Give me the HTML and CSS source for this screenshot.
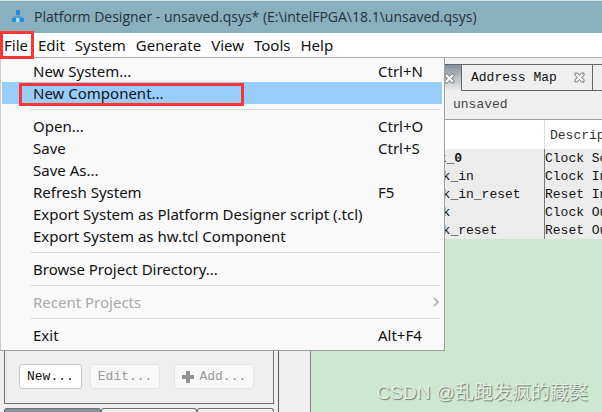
FILE: index.html
```html
<!DOCTYPE html>
<html lang="en">
<head>
<meta charset="utf-8">
<title>Platform Designer</title>
<link rel="stylesheet" href="styles.css">
</head>
<body>
<header class="titlebar">
  <svg class="logo" viewBox="0 0 14 14" aria-hidden="true">
    <path d="M7 5v3M3 10V8h8v2" fill="none" stroke="#3c8fd0"/>
    <rect x="5" y="1" width="4" height="5" fill="#1f8ee6"/>
    <rect x="1" y="9" width="4" height="4" fill="#1f8ee6"/>
    <rect x="5" y="9" width="3" height="4" fill="#a9d8f5"/>
    <rect x="9" y="9" width="4" height="4" fill="#1f8ee6"/>
  </svg>
  <span>Platform Designer - unsaved.qsys* (E:\intelFPGA\18.1\unsaved.qsys)</span>
</header>
<nav class="menubar">
  <button class="marked">File</button>
  <button>Edit</button>
  <button>System</button>
  <button>Generate</button>
  <button>View</button>
  <button>Tools</button>
  <button>Help</button>
</nav>
<main class="workspace">
  <section class="side">
    <div class="library">
      <button class="btn">New...</button>
      <button class="btn" disabled>Edit...</button>
      <button class="btn add" disabled>
        <svg class="plus" viewBox="0 0 12 12" aria-hidden="true"><path d="M4 0h4v4h4v4H8v4H4V8H0V4h4z" fill="#929292"/></svg>Add...
      </button>
    </div>
    <div class="side-tabs"><i class="on"></i><i></i><i></i></div>
  </section>
  <section class="content">
    <div class="tabs">
      <div class="tab active">
        <svg class="close" viewBox="0 0 11 11" aria-hidden="true"><path d="M1 1h2.500l2 2.500 2-2.500H10v2.500L7.500 5.500 10 7.500V10H7.500l-2-2.500-2 2.500H1V7.500l2.500-2L1 3.500z"/></svg>
      </div>
      <div class="tab">Address Map
        <svg class="close" viewBox="0 0 11 11" aria-hidden="true"><path d="M1 1h2.500l2 2.500 2-2.500H10v2.500L7.500 5.500 10 7.500V10H7.500l-2-2.500-2 2.500H1V7.500l2.500-2L1 3.500z"/></svg>
      </div>
      <div class="tab rest"></div>
    </div>
    <div class="path">unsaved</div>
    <table class="grid">
      <thead><tr><th class="name"></th><th>Description</th></tr></thead>
      <tbody>
        <tr><td class="name top">clk_0</td><td>Clock Source</td></tr>
        <tr><td class="name">clk_in</td><td>Clock Input</td></tr>
        <tr><td class="name">clk_in_reset</td><td>Reset Input</td></tr>
        <tr><td class="name">clk</td><td>Clock Output</td></tr>
        <tr><td class="name">clk_reset</td><td>Reset Output</td></tr>
      </tbody>
    </table>
  </section>
  <div class="menu" role="menu">
    <button class="item"><span>New System...</span><kbd>Ctrl+N</kbd></button>
    <button class="item current"><span>New Component...</span></button>
    <hr>
    <button class="item"><span>Open...</span><kbd>Ctrl+O</kbd></button>
    <button class="item"><span>Save</span><kbd>Ctrl+S</kbd></button>
    <button class="item"><span>Save As...</span></button>
    <button class="item"><span>Refresh System</span><kbd>F5</kbd></button>
    <button class="item"><span>Export System as Platform Designer script (.tcl)</span></button>
    <button class="item"><span>Export System as hw.tcl Component</span></button>
    <hr>
    <button class="item"><span>Browse Project Directory...</span></button>
    <hr>
    <button class="item" disabled><span>Recent Projects</span>
      <svg class="arrow" viewBox="0 0 6 10" aria-hidden="true"><path d="M1 1l4 4-4 4" fill="none" stroke="#a8a8a8" stroke-width="1.500"/></svg>
    </button>
    <hr>
    <button class="item"><span>Exit</span><kbd>Alt+F4</kbd></button>
  </div>
</main>
<div class="watermark">CSDN @乱跑发疯的藏獒</div>
</body>
</html>
```
FILE: styles.css
```css
*, *::after { box-sizing: border-box; }

body {
  margin: 0;
  height: 100vh;
  overflow: hidden;
  position: relative;
  display: flex;
  flex-direction: column;
  background: #efefef;
  color: #111;
  font-family: "Noto Sans", sans-serif;
  font-size: 15px;
}

button {
  margin: 0;
  padding: 0;
  border: 0;
  background: none;
  color: inherit;
  font: inherit;
}

.titlebar {
  flex: none;
  height: 33px;
  display: flex;
  align-items: center;
  gap: 9px;
  padding: 0 11px 2px;
  border-top: 1px solid #d5e3e8;
  background: #8aafbe;
  color: #24313a;
  font-family: "Open Sans", sans-serif;
  font-size: 14px;
  white-space: nowrap;
}

.logo { width: 14px; height: 14px; }

.menubar {
  flex: none;
  height: 25px;
  display: flex;
  align-items: center;
  gap: 10px;
  padding: 0 4px;
  border-bottom: 1px solid #aaa;
  background: #fff;
}

.marked { position: relative; }

.marked::after {
  content: "";
  position: absolute;
  z-index: 3;
  inset: -4px -6px -4px -4px;
  border: 3px solid #fb3434;
}

.workspace {
  flex: 1;
  min-height: 0;
  position: relative;
  display: grid;
  grid-template-columns: 279px 1fr;
  font-family: "Liberation Mono", monospace;
  font-size: 13px;
}

.side {
  display: flex;
  flex-direction: column;
  gap: 4px;
  padding: 0 4px;
  border-right: 1px solid #555;
}

.library {
  flex: 1;
  display: flex;
  align-items: flex-end;
  gap: 8px;
  padding: 0 14px 14px;
  border: 1px solid #707070;
}

.btn {
  height: 25px;
  padding: 0 7px;
  border: 1px solid #c8c8c8;
  border-radius: 3px;
  background: #fff;
  white-space: nowrap;
}

.btn:disabled {
  border-color: #e4e4e4;
  background: #f8f8f8;
  color: #999;
}

.add {
  display: flex;
  align-items: center;
  gap: 5px;
  margin-left: 6px;
}

.plus { width: 12px; height: 12px; }

.side-tabs {
  flex: none;
  height: 4px;
  display: grid;
  grid-template-columns: 97px 96px 1fr;
}

.side-tabs i {
  border: 1px solid #707070;
  border-bottom: 0;
  border-radius: 3px 3px 0 0;
}

.side-tabs .on { background: #89939c; }

.content {
  display: flex;
  flex-direction: column;
  min-width: 0;
  margin-left: 31px;
  padding-top: 6px;
  border-left: 1px solid #888;
  background: linear-gradient(#efefef 62px, #cce8cf 62px);
}

.tabs {
  flex: none;
  height: 27px;
  display: grid;
  grid-template-columns: 151px 131px 1fr;
}

.tab {
  display: flex;
  align-items: center;
  justify-content: space-between;
  padding: 0 7px 0 9px;
  border: 1px solid #666;
  border-left: 0;
  white-space: nowrap;
}

.active {
  justify-content: flex-end;
  padding-right: 6px;
  border-bottom: 0;
  background: linear-gradient(#84909b, #efefef);
}

.rest { border-right: 0; }

.close {
  width: 11px;
  height: 11px;
  fill: #f4f4f4;
  stroke: #777;
}

.path {
  flex: none;
  height: 29px;
  padding-left: 142px;
  border-bottom: 1px solid #999da5;
  line-height: 28px;
  color: #444;
}

.grid {
  width: 100%;
  table-layout: fixed;
  border-collapse: separate;
  border-spacing: 0;
  line-height: 18px;
  white-space: nowrap;
}

.grid th {
  height: 29px;
  padding: 2px 0 0 5px;
  overflow: hidden;
  background: #fff;
  color: #333;
  font-weight: normal;
  text-align: left;
}

.grid td {
  height: 18px;
  padding: 2px 0 0;
  line-height: 16px;
  overflow: hidden;
  background: #ececec;
}

.grid .name {
  width: 234px;
  padding-left: 116px;
  border-right: 1px solid #777;
}

.grid th.name { border-right-color: #ddd; }

.grid .top {
  padding-left: 112px;
  font-weight: bold;
}

.menu {
  position: absolute;
  z-index: 2;
  top: 0;
  left: 0;
  width: 445px;
  padding: 2px 2px 4px 1px;
  border: 1px solid #a0a0a0;
  border-top: 0;
  border-left-color: #ccc;
  background: #f9f9f9;
  font-family: "Noto Sans", sans-serif;
  font-size: 15px;
}

.item {
  position: relative;
  width: 100%;
  height: 22px;
  display: grid;
  grid-template-columns: 1fr 64px;
  align-items: center;
  padding-left: 31px;
  line-height: 22px;
  text-align: left;
  white-space: nowrap;
}

.item kbd { font: inherit; }
.item:disabled { color: #aaa; }
.current { background: #99cefc; }

.current::after {
  content: "";
  position: absolute;
  left: 17px;
  top: 1px;
  width: 225px;
  height: 23px;
  border: 3px solid #fb3434;
}

.arrow {
  width: 6px;
  height: 10px;
  justify-self: end;
  margin-right: 3px;
}

.menu hr {
  height: 1px;
  margin: 5px 2px 5px 28px;
  border: 0;
  background: #ddd;
}

.watermark {
  position: absolute;
  z-index: 3;
  right: 14px;
  bottom: 6px;
  color: #e2eee4;
  font-family: "Liberation Sans", "Noto Sans CJK SC", sans-serif;
  font-size: 19px;
  line-height: 26px;
  text-shadow: 1px 1px 1px #6c7a6f;
}
```
